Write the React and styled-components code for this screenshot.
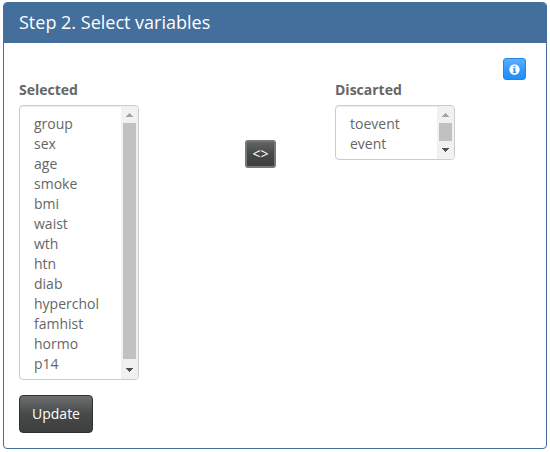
import React from "react";
import styled, { createGlobalStyle } from "styled-components";

const GlobalStyle = createGlobalStyle`
  *, *::before, *::after { box-sizing: border-box; }
  body {
    margin: 0;
    background: #fff;
    color: #666;
    font: 14px/20px "Open Sans", "Noto Sans", sans-serif;
  }
`;

const Panel = styled.section`
  width: 544px;
  height: 447px;
  margin: 2px 0 0 3px;
  border: 1px solid #446e9b;
  border-radius: 4px;
  background: #fff;
`;

const Heading = styled.header`
  height: 40px;
  padding: 9px 15px;
  border-radius: 3px 3px 0 0;
  background: #446e9b;
  color: #fff;
  font-size: 18px;
  line-height: 20px;
`;

const Body = styled.div`
  display: flex;
  flex-direction: column;
  align-items: flex-start;
  padding: 15px 20px 15px 15px;
`;

const Button = styled.button`
  display: flex;
  align-items: center;
  justify-content: center;
  padding: 0;
  font: inherit;
  color: #fff;
`;

const InfoButton = styled(Button)`
  align-self: flex-end;
  width: 23px;
  height: 22px;
  border: 1px solid #1f86e6;
  border-radius: 3px;
  background: linear-gradient(#5eb0ff, #3399ff 50%, #228df7);
`;

const SwapButton = styled(Button)`
  width: 31px;
  height: 28px;
  margin: 60px 59px 0 106px;
  border: 2px solid #777;
  border-radius: 3px;
  background: linear-gradient(#606362, #474949 50%, #3d3f3f);
`;

const UpdateButton = styled(Button)`
  width: 74px;
  height: 38px;
  margin-top: 15px;
  border: 1px solid #2f3030;
  border-radius: 4px;
  background: linear-gradient(#6d7070, #474949 50%, #3d3f3f);
`;

const Columns = styled.div`
  display: flex;
  align-items: flex-start;
`;

const Field = styled.div`
  width: 120px;
`;

const Label = styled.div`
  height: 25px;
  font-weight: 700;
`;

const ListBox = styled.div`
  display: flex;
  height: ${(p) => p.$height}px;
  border: 1px solid #ccc;
  border-radius: 4px;
  overflow: hidden;
  box-shadow: inset 0 1px 1px rgba(0, 0, 0, 0.075);
`;

const Options = styled.ul`
  flex: 1;
  margin: 0;
  padding: 8px 0 0 14px;
  list-style: none;
`;

const Option = styled.li`
  height: 20px;
`;

const Scrollbar = styled.div`
  display: flex;
  flex-direction: column;
  align-items: center;
  justify-content: space-between;
  width: 17px;
  margin-top: 1px;
  background: #f1f1f1;
`;

const Track = styled.div`
  flex: 1;
`;

const Thumb = styled.div`
  width: 13px;
  height: ${(p) => p.$height}px;
  background: #c1c1c1;
`;

const Arrow = styled.svg`
  display: block;
  flex: none;
  width: 17px;
  height: ${(p) => p.$height}px;
`;

function ListField({ label, items, height, thumb }) {
  return (
    <Field>
      <Label>{label}</Label>
      <ListBox $height={height}>
        <Options>
          {items.map((item) => (
            <Option key={item}>{item}</Option>
          ))}
        </Options>
        <Scrollbar>
          <Arrow $height={16} viewBox="0 0 17 16">
            <path d="M5 10h7v-1h-1v-1h-1v-1h-1v-1h-1v1h-1v1h-1v1h-1z" fill="#a3a3a3" />
          </Arrow>
          <Track>
            <Thumb $height={thumb} />
          </Track>
          <Arrow $height={18} viewBox="0 0 17 18">
            <path d="M5 7h7v1h-1v1h-1v1h-1v1h-1v-1h-1v-1h-1v-1h-1z" fill="#505050" />
          </Arrow>
        </Scrollbar>
      </ListBox>
    </Field>
  );
}

const selected = [
  "group", "sex", "age", "smoke", "bmi", "waist", "wth",
  "htn", "diab", "hyperchol", "famhist", "hormo", "p14",
];

export default function App() {
  return (
    <>
      <GlobalStyle />
      <Panel>
        <Heading>Step 2. Select variables</Heading>
        <Body>
          <InfoButton aria-label="Information">
            <svg width="11" height="11" viewBox="0 0 11 11">
              <circle cx="5.5" cy="5.5" r="5.2" fill="#fff" />
              <path d="M4.6 1.8h1.8v1.5H4.6zM3.9 4.3h2.5v3.5h.8V9H3.8V7.8h.8V5.4h-.7z" fill="#2f94f5" />
            </svg>
          </InfoButton>
          <Columns>
            <ListField label="Selected" items={selected} height={275} thumb={236} />
            <SwapButton>&lt;&gt;</SwapButton>
            <ListField label="Discarted" items={["toevent", "event"]} height={55} thumb={18} />
          </Columns>
          <UpdateButton>Update</UpdateButton>
        </Body>
      </Panel>
    </>
  );
}
